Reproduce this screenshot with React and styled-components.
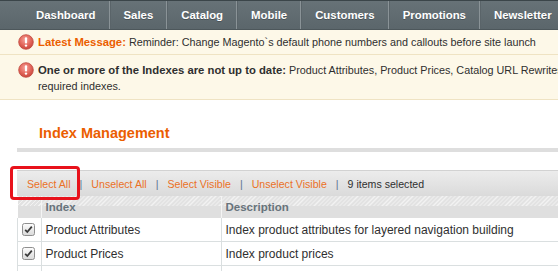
import styled, { createGlobalStyle } from 'styled-components'

const GlobalStyle = createGlobalStyle`
  body {
    margin: 0;
    background: #fff;
    font-family: 'Liberation Sans', Arial, sans-serif;
    font-size: 12px;
    color: #2f2f2f;
  }
`

const Page = styled.div`
  width: 100vw;
  overflow: hidden;
`

const Nav = styled.ul`
  display: flex;
  margin: 0;
  padding: 0 0 0 21px;
  list-style: none;
  height: 28px;
  border-top: 1px solid #3b4549;
  border-bottom: 1px solid #4d575b;
  background: linear-gradient(#677277, #5b666b);
  white-space: nowrap;
`

const NavItem = styled.li`
  display: flex;
  align-items: center;
  padding: 0 13px 0 14px;
  color: #fff;
  font-weight: bold;
  font-size: 11.4px;
  text-shadow: 0 1px 0 #4a5357;
  border-left: ${p => (p.$first ? '1px solid transparent' : '1px solid #8a9397')};
  box-shadow: ${p => (p.$first ? 'none' : 'inset 1px 0 0 #5a6469')};
`

const Messages = styled.div`
  background: #fdf8e8;
  border-bottom: 1px solid #efe3c3;
  font-size: 10.8px;
`

const Message = styled.div`
  display: flex;
  align-items: ${p => (p.$multi ? 'flex-start' : 'center')};
  padding: ${p => (p.$multi ? '7px 0 5px 18px' : '4px 0 4px 18px')};
  border-top: ${p => (p.$first ? 'none' : '1px solid #efe3c3')};
  line-height: 16px;
  white-space: nowrap;
`

const Bold = styled.strong`
  color: ${p => p.$color || '#2f2f2f'};
  font-weight: bold;
  font-size: 11.3px;
`

const IconWrap = styled.span`
  flex: none;
  width: 16px;
  height: 16px;
  margin-right: 4px;
`

const ErrorIcon = () => (
  <IconWrap>
    <svg width="16" height="16" viewBox="0 0 16 16">
      <defs>
        <radialGradient id="eg" cx="45%" cy="35%" r="65%">
          <stop offset="0" stopColor="#f6a39a" />
          <stop offset="0.6" stopColor="#e2665b" />
          <stop offset="1" stopColor="#c9473d" />
        </radialGradient>
      </defs>
      <circle cx="8" cy="8" r="7.3" fill="url(#eg)" stroke="#c04a40" strokeWidth="0.8" />
      <rect x="6.9" y="3.2" width="2.2" height="6.2" rx="1" fill="#fff" />
      <circle cx="8" cy="11.6" r="1.2" fill="#fff" />
    </svg>
  </IconWrap>
)

const Content = styled.div`
  padding: 20px 0 0 17px;
`

const ContentHeader = styled.div`
  padding: 4px 0 6px 22px;
  border-bottom: 4px solid #dedede;
`

const Title = styled.h3`
  margin: 0;
  color: #eb5e00;
  font-size: 14.5px;
  font-weight: bold;
  line-height: 18px;
`

const Grid = styled.div`
  margin-top: 18px;
  width: 700px;
`

const Toolbar = styled.div`
  position: relative;
  display: flex;
  align-items: center;
  height: 25px;
  padding-left: 10px;
  border-top: 1px solid #d2d2d2;
  background: linear-gradient(#ececec, #dadada);
  font-size: 10.6px;
  white-space: nowrap;
`

const Highlight = styled.div`
  position: absolute;
  left: -7px;
  top: -5px;
  width: 64px;
  height: 28px;
  border: 3px solid #e8121b;
  border-radius: 4px;
`

const Link = styled.a`
  color: #eb7126;
  text-decoration: none;
`

const Sep = styled.span`
  color: #5b7391;
  margin: 0 9px;
`

const Count = styled.span`
  color: #2f2f2f;
`

const Table = styled.table`
  border-collapse: collapse;
  width: 100%;
`

const HeadCell = styled.th`
  height: 22px;
  padding: 0 4px;
  text-align: left;
  font-weight: bold;
  font-size: 11.5px;
  color: #67737b;
  border-right: 1px solid #f4f4f4;
  background:
    linear-gradient(to bottom, transparent 0, transparent 10px, #dfdfdf 10px),
    repeating-linear-gradient(135deg, #f2f2f2 0 1px, #e2e2e2 1px 3px);
  width: ${p => p.$w || 'auto'};
`

const Cell = styled.td`
  height: 23px;
  padding: 0 4px;
  border: 1px solid #dadfe0;
  border-top: none;
  color: #2f2f2f;
  white-space: nowrap;
`

const CheckCell = styled(Cell)`
  width: 14px;
  padding: 0 4px;
`

const Box = styled.span`
  display: block;
  width: 13px;
  height: 13px;
`

const Check = () => (
  <Box>
    <svg width="13" height="13" viewBox="0 0 13 13">
      <defs>
        <linearGradient id="cg" x1="0" y1="0" x2="0" y2="1">
          <stop offset="0" stopColor="#fdfdfd" />
          <stop offset="1" stopColor="#d9d9d9" />
        </linearGradient>
      </defs>
      <rect x="0.5" y="0.5" width="12" height="12" rx="2" fill="url(#cg)" stroke="#8f8f8f" />
      <path d="M3.2 6.8 L5.3 9 L9.8 3.6" fill="none" stroke="#3a3a3a" strokeWidth="1.8" />
    </svg>
  </Box>
)

const navItems = ['Dashboard', 'Sales', 'Catalog', 'Mobile', 'Customers', 'Promotions', 'Newsletter', 'CMS']

const rows = [
  ['Product Attributes', 'Index product attributes for layered navigation building'],
  ['Product Prices', 'Index product prices'],
  ['Catalog URL Rewrites', 'Index product and categories URL rewrites']
]

export default function App () {
  return (
    <Page>
      <GlobalStyle />
      <Nav>
        {navItems.map((item, i) => (
          <NavItem key={item} $first={i === 0}>{item}</NavItem>
        ))}
      </Nav>
      <Messages>
        <Message $first>
          <ErrorIcon />
          <span>
            <Bold $color='#eb5e00'>Latest Message:</Bold> Reminder: Change Magento`s default phone numbers and callouts before site launch
          </span>
        </Message>
        <Message $multi>
          <ErrorIcon />
          <span>
            <Bold>One or more of the Indexes are not up to date:</Bold> Product Attributes, Product Prices, Catalog URL Rewrites, Product Flat Data, Category Products. Click here to go to Index Management and rebuild
            <br />
            required indexes.
          </span>
        </Message>
      </Messages>
      <Content>
        <ContentHeader>
          <Title>Index Management</Title>
        </ContentHeader>
        <Grid>
          <Toolbar>
            <Highlight />
            <Link href='#'>Select All</Link>
            <Sep>|</Sep>
            <Link href='#'>Unselect All</Link>
            <Sep>|</Sep>
            <Link href='#'>Select Visible</Link>
            <Sep>|</Sep>
            <Link href='#'>Unselect Visible</Link>
            <Sep>|</Sep>
            <Count>9 items selected</Count>
          </Toolbar>
          <Table>
            <thead>
              <tr>
                <HeadCell $w='15px' />
                <HeadCell $w='171px'>Index</HeadCell>
                <HeadCell>Description</HeadCell>
              </tr>
            </thead>
            <tbody>
              {rows.map(([name, desc]) => (
                <tr key={name}>
                  <CheckCell><Check /></CheckCell>
                  <Cell>{name}</Cell>
                  <Cell>{desc}</Cell>
                </tr>
              ))}
            </tbody>
          </Table>
        </Grid>
      </Content>
    </Page>
  )
}
